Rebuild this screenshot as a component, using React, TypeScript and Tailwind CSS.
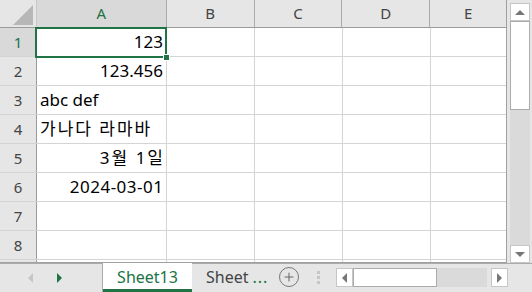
import { Plus } from "lucide-react";

const cols = [
  { key: "A", w: "w-[130px]" },
  { key: "B", w: "w-[88px]" },
  { key: "C", w: "w-[88px]" },
  { key: "D", w: "w-[88px]" },
  { key: "E", w: "w-[76px]" },
];

const cells: { text: string; align: "left" | "right"; track?: string }[] = [
  { text: "123", align: "right" },
  { text: "123.456", align: "right" },
  { text: "abc def", align: "left" },
  { text: "가나다 라마바", align: "left", track: "tracking-[2px]" },
  { text: "3월 1일", align: "right", track: "tracking-[2px] -mr-[2px]" },
  { text: "2024-03-01", align: "right", track: "tracking-[0.5px] -mr-[0.5px]" },
  { text: "", align: "left" },
  { text: "", align: "left" },
];

const font = "font-['Noto_Sans','Noto_Sans_CJK_KR',sans-serif]";

function HeaderRow() {
  return (
    <div className="flex h-[28px] bg-[#e6e6e6] border-b border-[#9b9b9b]">
      <div className="w-[37px] h-full border-r border-[#c8c8c8] flex items-end justify-end pr-[3px] pb-[2px]">
        <div className="w-0 h-0 border-l-[20px] border-l-transparent border-b-[20px] border-b-[#b7b7b7]" />
      </div>
      {cols.map((c, i) => (
        <div
          key={c.key}
          className={`${c.w} h-full flex items-center justify-center text-[15px] ${
            i === 0 ? "text-[#217346] bg-[#d9d9d9]" : "text-[#444]"
          } ${i === cols.length - 1 ? "" : "border-r border-[#ababab]"}`}
        >
          {c.key}
        </div>
      ))}
    </div>
  );
}

function Row({ n, text, align, track }: { n: number; text: string; align: string; track?: string }) {
  return (
    <div className="flex h-[29px] border-b border-[#d4d4d4]">
      <div
        className={`w-[37px] h-full flex items-center justify-center text-[15px] border-r border-[#9b9b9b] ${
          n === 1 ? "bg-[#d9d9d9] text-[#217346]" : "bg-[#e6e6e6] text-[#444]"
        }`}
      >
        {n}
      </div>
      <div
        className={`w-[130px] h-full border-r border-[#d4d4d4] flex items-center px-[3px] text-[17px] text-black whitespace-nowrap ${
          align === "right" ? "justify-end" : "justify-start"
        }`}
      >
        <span className={track ?? ""}>{text}</span>
      </div>
      <div className="w-[88px] h-full border-r border-[#d4d4d4]" />
      <div className="w-[88px] h-full border-r border-[#d4d4d4]" />
      <div className="w-[88px] h-full border-r border-[#d4d4d4]" />
      <div className="w-[75px] h-full" />
    </div>
  );
}

function VScroll() {
  return (
    <div className="w-[20px] mt-[3px] ml-[3px] h-[260px] flex flex-col bg-[#dadada]">
      <div className="h-[18px] bg-white border border-[#c6c6c6] flex items-center justify-center">
        <div className="w-0 h-0 border-x-[5px] border-x-transparent border-b-[5px] border-b-[#777]" />
      </div>
      <div className="h-[89px] bg-white border border-[#acacac]" />
      <div className="flex-1" />
      <div className="h-[18px] bg-white border border-[#c6c6c6] flex items-center justify-center">
        <div className="w-0 h-0 border-x-[5px] border-x-transparent border-t-[5px] border-t-[#777]" />
      </div>
    </div>
  );
}

function TabBar() {
  return (
    <div className="flex h-[29px] bg-[#e6e6e6] text-[16px]">
      <div className="w-[103px] border-t border-r border-[#ababab] flex items-center pl-[28px] gap-[24px]">
        <div className="w-0 h-0 border-y-[5px] border-y-transparent border-r-[5px] border-r-[#c6c6c6]" />
        <div className="w-0 h-0 border-y-[5px] border-y-transparent border-l-[5px] border-l-[#217346]" />
      </div>
      <div className="w-[89px] bg-white border-b-[3px] border-[#217346] flex items-center justify-center text-[#217346] pt-[1px]">
        Sheet13
      </div>
      <div className="flex-1 border-t border-[#ababab] flex items-start">
        <div className="flex items-center h-[26px] pl-[14px] text-[#444] w-[87px] shrink-0">
          Sheet
          <span className="text-[#217346] ml-[4px] tracking-[1px]">...</span>
        </div>
        <div className="h-[26px] flex items-center">
          <div className="w-[20px] h-[20px] rounded-full border-[1.5px] border-[#777] flex items-center justify-center">
            <Plus size={14} strokeWidth={1.75} color="#666" />
          </div>
        </div>
        <div className="h-[26px] flex flex-col justify-center gap-[2px] ml-[18px]">
          <div className="w-[3px] h-[3px] bg-[#c6c6c6]" />
          <div className="w-[3px] h-[3px] bg-[#c6c6c6]" />
          <div className="w-[3px] h-[3px] bg-[#c6c6c6]" />
        </div>
        <div className="flex h-[19px] mt-[4px] ml-[16px] bg-[#dadada]">
          <div className="w-[17px] bg-white border border-[#c6c6c6] flex items-center justify-center">
            <div className="w-0 h-0 border-y-[5px] border-y-transparent border-r-[5px] border-r-[#777]" />
          </div>
          <div className="w-[84px] bg-white border border-[#acacac]" />
          <div className="w-[50px]" />
        </div>
        <div className="w-[17px] h-[19px] mt-[4px] ml-[4px] bg-white border border-[#c6c6c6] flex items-center justify-center">
          <div className="w-0 h-0 border-y-[5px] border-y-transparent border-l-[5px] border-l-[#777]" />
        </div>
      </div>
    </div>
  );
}

export default function App() {
  return (
    <div className={`w-[532px] h-[292px] overflow-hidden bg-[#e6e6e6] ${font}`}>
      <div className="flex h-[263px]">
        <div className="relative w-[507px] h-[263px] bg-white border-r border-b border-[#a0a0a0] overflow-hidden">
          <HeaderRow />
          {cells.map((c, i) => (
            <Row key={i} n={i + 1} text={c.text} align={c.align} track={c.track} />
          ))}
          <div className="flex h-[10px]">
            <div className="w-[37px] h-full bg-[#e6e6e6] border-r border-[#9b9b9b]" />
            <div className="w-[130px] h-full border-r border-[#d4d4d4]" />
            <div className="w-[88px] h-full border-r border-[#d4d4d4]" />
            <div className="w-[88px] h-full border-r border-[#d4d4d4]" />
            <div className="w-[88px] h-full border-r border-[#d4d4d4]" />
          </div>
          {/* active cell */}
          <div className="absolute left-[35px] top-[27px] w-[132px] h-[31px] border-2 border-[#217346]" />
          <div className="absolute left-[163px] top-[54px] w-[7px] h-[7px] bg-[#217346] border border-white" />
        </div>
        <VScroll />
      </div>
      <TabBar />
    </div>
  );
}
